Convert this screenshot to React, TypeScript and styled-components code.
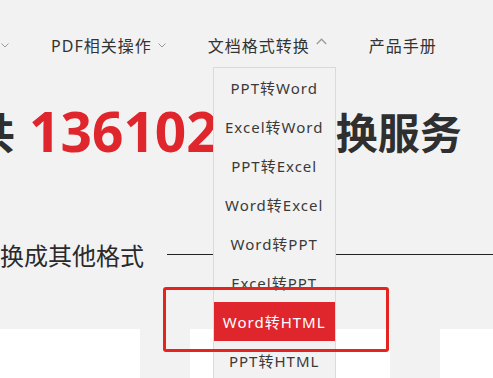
import React from "react";
import styled, { createGlobalStyle } from "styled-components";

const GlobalStyle = createGlobalStyle`
  html, body { margin: 0; padding: 0; background: #f2f2f2; overflow: hidden; }
  body { font-family: "Noto Sans", "Noto Sans CJK SC", sans-serif; color: #333; }
`;

const Page = styled.div`
  position: relative;
  width: 493px;
  height: 378px;
  overflow: hidden;
  background: #f2f2f2;
`;

const Nav = styled.nav`
  display: flex;
  align-items: stretch;
  gap: 42px;
  height: 90px;
`;

const NavItem = styled.div<{ $offset?: number }>`
  position: relative;
  display: flex;
  align-items: center;
  gap: ${(p) => (p.$offset !== undefined ? 8 : 6)}px;
  margin-left: ${(p) => p.$offset ?? 0}px;
  font-size: 16px;
  letter-spacing: 1px;
  color: #333;
  white-space: nowrap;
`;

const Chevron = styled.svg<{ $up?: boolean }>`
  display: block;
  margin-top: ${(p) => (p.$up ? -7 : 1)}px;
`;

const Dropdown = styled.ul`
  position: absolute;
  top: 67px;
  left: 5px;
  z-index: 5;
  margin: 0;
  padding: 0;
  list-style: none;
  width: 123px;
  box-sizing: border-box;
  border: 1px solid #dadada;
  background: #f2f2f2;
`;

const MenuItem = styled.li<{ $active?: boolean }>`
  height: 39px;
  display: flex;
  align-items: center;
  justify-content: center;
  font-size: 15px;
  letter-spacing: 1px;
  color: ${(p) => (p.$active ? "#fff" : "#3a3a3a")};
  background: ${(p) => (p.$active ? "#e0262d" : "transparent")};
  white-space: nowrap;
`;

const Title = styled.h1`
  margin: 0 0 0 -27px;
  height: 80px;
  display: flex;
  align-items: center;
  font-size: 42px;
  font-weight: 700;
  color: #2f2f2f;
  white-space: nowrap;
`;

const Count = styled.span`
  font-size: 55px;
  color: #e0262d;
  margin: 0 13px 0 14px;
`;

const SubRow = styled.div`
  margin-top: 67px;
  height: 34px;
  display: flex;
  align-items: center;
  gap: 23px;
  margin-left: -24px;
`;

const SubTitle = styled.h2`
  margin: 0;
  font-size: 24px;
  font-weight: 400;
  color: #2a2a2a;
  white-space: nowrap;
`;

const Rule = styled.div`
  flex: 1;
  height: 1px;
  background: #222;
`;

const Cards = styled.div`
  margin-top: 58px;
  margin-left: -60px;
  display: flex;
  gap: 50px;
`;

const Card = styled.div`
  flex: 0 0 200px;
  height: 120px;
  background: #fff;
`;

const Highlight = styled.div`
  position: absolute;
  left: 163px;
  top: 287px;
  width: 226px;
  height: 65px;
  box-sizing: border-box;
  border: 3px solid #e5231f;
  border-radius: 3px;
  z-index: 10;
`;

const Down = () => (
  <Chevron width="8" height="5" viewBox="0 0 8 5">
    <polyline points="0.5,0.5 4,4 7.5,0.5" fill="none" stroke="#9a9a9a" strokeWidth="1" />
  </Chevron>
);

const Up = () => (
  <Chevron $up width="11" height="7" viewBox="0 0 11 7">
    <polyline points="0.8,6 5.5,1.2 10.2,6" fill="none" stroke="#9a9a9a" strokeWidth="1.3" />
  </Chevron>
);

const items = [
  "PPT转Word",
  "Excel转Word",
  "PPT转Excel",
  "Word转Excel",
  "Word转PPT",
  "Excel转PPT",
  "Word转HTML",
  "PPT转HTML",
];

export default function App() {
  return (
    <Page>
      <GlobalStyle />
      <Nav>
        <NavItem $offset={-75}>
          常用工具
          <Down />
        </NavItem>
        <NavItem>
          PDF相关操作
          <Down />
        </NavItem>
        <NavItem>
          文档格式转换
          <Up />
          <Dropdown>
            {items.map((t) => (
              <MenuItem key={t} $active={t === "Word转HTML"}>
                {t}
              </MenuItem>
            ))}
          </Dropdown>
        </NavItem>
        <NavItem>产品手册</NavItem>
      </Nav>
      <Title>
        共<Count>13610288</Count>转换服务
      </Title>
      <SubRow>
        <SubTitle>转换成其他格式</SubTitle>
        <Rule />
      </SubRow>
      <Cards>
        <Card />
        <Card />
        <Card />
      </Cards>
      <Highlight />
    </Page>
  );
}
